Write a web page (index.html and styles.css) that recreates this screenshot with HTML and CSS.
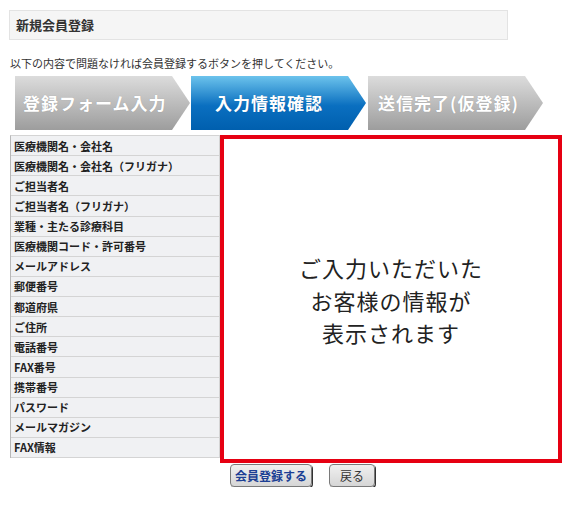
FILE: index.html
```html
<!DOCTYPE html>
<html lang="ja">
<head>
    <meta charset="UTF-8">
    <meta name="viewport" content="width=device-width, initial-scale=1.0">
    <title>新規会員登録</title>
    <link rel="stylesheet" href="styles.css">
</head>
<body>

<div class="page">
    <h1 class="page-title">新規会員登録</h1>
    <p class="lead">以下の内容で問題なければ会員登録するボタンを押してください。</p>

    <ol class="steps">
        <li class="step">登録フォーム入力</li>
        <li class="step current">入力情報確認</li>
        <li class="step">送信完了(仮登録)</li>
    </ol>

    <div class="confirm">
        <ul class="fields">
            <li>医療機関名・会社名</li>
            <li>医療機関名・会社名（フリガナ）</li>
            <li>ご担当者名</li>
            <li>ご担当者名（フリガナ）</li>
            <li>業種・主たる診療科目</li>
            <li>医療機関コード・許可番号</li>
            <li>メールアドレス</li>
            <li>郵便番号</li>
            <li>都道府県</li>
            <li>ご住所</li>
            <li>電話番号</li>
            <li>FAX番号</li>
            <li>携帯番号</li>
            <li>パスワード</li>
            <li>メールマガジン</li>
            <li>FAX情報</li>
        </ul>
        <div class="values">
            <p>ご入力いただいた<br>お客様の情報が<br>表示されます</p>
        </div>
    </div>

    <div class="actions">
        <button class="btn btn-submit">会員登録する</button>
        <button class="btn btn-back">戻る</button>
    </div>
</div>

</body>
</html>
```

FILE: styles.css
```css
body {
    font-family: "Noto Sans CJK JP", "Liberation Sans", sans-serif;
    background-color: #ffffff;
    color: #222222;
    margin: 0;
}
.page {
    padding: 10px 0 0 10px;
    width: 560px;
}
.page-title {
    width: 491px;
    height: 28px;
    margin: 0 0 0 -1px;
    padding: 0 0 0 6px;
    background-color: #f5f5f5;
    border: 1px solid #e3e3e3;
    font-size: 13px;
    line-height: 28px;
    font-weight: bold;
    color: #333333;
}
.lead {
    margin: 15px 0 0 0;
    font-size: 11px;
    line-height: 16px;
    color: #333333;
}
.steps {
    list-style: none;
    display: flex;
    gap: 1px;
    margin: 5px 0 0 5px;
    padding: 0;
}
.step {
    width: 175px;
    height: 54px;
    padding-left: 8px;
    box-sizing: border-box;
    background: linear-gradient(#dcdcdc, #9d9d9d);
    clip-path: polygon(0 0, 157px 0, 100% 50%, 157px 100%, 0 100%);
    color: #ffffff;
    font-size: 17px;
    font-weight: bold;
    letter-spacing: 1px;
    line-height: 54px;
    text-shadow: 0 0 1px rgba(0, 0, 0, 0.2);
}
.step.current {
    padding-left: 24px;
    background: linear-gradient(#6cc3ec, #0a6fc0 55%, #005fae);
}
.step:last-child {
    margin-left: 1px;
    padding-left: 10px;
}
.confirm {
    display: flex;
    align-items: flex-start;
    margin-top: 5px;
}
.fields {
    list-style: none;
    display: flex;
    flex-direction: column;
    width: 210px;
    height: 323px;
    box-sizing: border-box;
    margin: 0;
    padding: 0;
    border-left: 1px solid #b8b8b8;
    border-top: 1px solid #d4d4d4;
}
.fields li {
    flex: 1;
    padding-left: 3px;
    background-color: #f0f1f3;
    border-bottom: 1px solid #d4d4d4;
    border-right: 1px solid #d4d4d4;
    font-size: 11px;
    font-weight: bold;
    display: flex;
    align-items: center;
    white-space: nowrap;
}
.values {
    width: 342px;
    height: 328px;
    box-sizing: border-box;
    border: 4px solid #e60012;
    display: flex;
    align-items: center;
    justify-content: center;
}
.values p {
    margin: 2px 0 0 0;
    text-align: center;
    font-size: 22px;
    letter-spacing: 1px;
    line-height: 32.5px;
    color: #222222;
}
.actions {
    display: flex;
    gap: 17px;
    margin: 1px 0 0 220px;
}
.btn {
    height: 23px;
    padding: 0 10px;
    background: linear-gradient(#f0f0f0, #d6d6d6);
    border: 1px solid #7a7a7a;
    border-radius: 4px;
    box-shadow: 1px 1px 0 #333333;
    font-family: inherit;
    font-size: 12px;
    color: #333333;
    cursor: pointer;
}
.btn-submit {
    padding: 0 4px;
    color: #1c3f94;
    font-weight: bold;
}
.btn:hover {
    background: linear-gradient(#ffffff, #e2e2e2);
}
```
